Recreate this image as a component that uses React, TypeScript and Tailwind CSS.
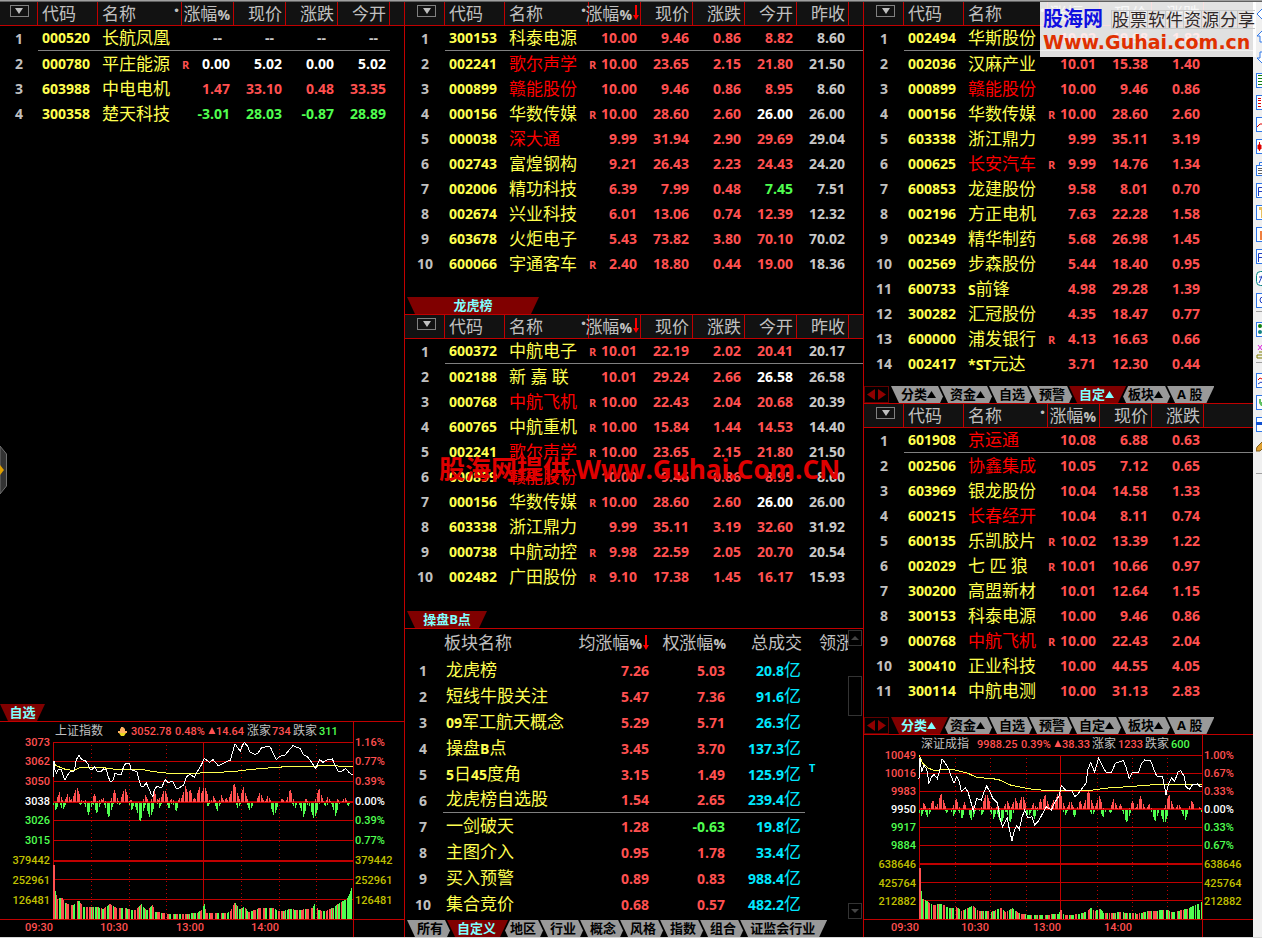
import clsx from "clsx";
import { FC, Fragment, ReactNode } from "react";

type Tone = "r" | "g" | "w" | "n";

interface Stock {
  code: string;
  name: string;
  hot?: boolean;
  margin?: boolean;
  values: string[];
  tones: string;
}

const toneClass: Record<Tone, string> = {
  r: "text-[#ff5050]",
  g: "text-[#50ff50]",
  w: "text-white",
  n: "text-[#c8c8c8]",
};

// "code|name|flags|values|tones", flags: h = highlighted name, R = margin mark
const parse = (rows: string[]): Stock[] =>
  rows.map((row) => {
    const [code, name, flags, values, tones] = row.split("|");
    return {
      code,
      name,
      hot: flags.includes("h"),
      margin: flags.includes("R"),
      values: values.split(" "),
      tones,
    };
  });

const watchList = parse([
  "000520|长航凤凰||-- -- -- --|nnnn",
  "000780|平庄能源|R|0.00 5.02 0.00 5.02|wwww",
  "603988|中电电机||1.47 33.10 0.48 33.35|rrrr",
  "300358|楚天科技||-3.01 28.03 -0.87 28.89|gggg",
]);

const dragonList = parse([
  "300153|科泰电源||10.00 9.46 0.86 8.82 8.60|rrrrn",
  "002241|歌尔声学|hR|10.00 23.65 2.15 21.80 21.50|rrrrn",
  "000899|赣能股份|h|10.00 9.46 0.86 8.95 8.60|rrrrn",
  "000156|华数传媒|R|10.00 28.60 2.60 26.00 26.00|rrrwn",
  "000038|深大通|h|9.99 31.94 2.90 29.69 29.04|rrrrn",
  "002743|富煌钢构||9.21 26.43 2.23 24.43 24.20|rrrrn",
  "002006|精功科技||6.39 7.99 0.48 7.45 7.51|rrrgn",
  "002674|兴业科技||6.01 13.06 0.74 12.39 12.32|rrrrn",
  "603678|火炬电子||5.43 73.82 3.80 70.10 70.02|rrrrn",
  "600066|宇通客车|R|2.40 18.80 0.44 19.00 18.36|rrrrn",
]);

const pointList = parse([
  "600372|中航电子|R|10.01 22.19 2.02 20.41 20.17|rrrrn",
  "002188|新 嘉 联||10.01 29.24 2.66 26.58 26.58|rrrwn",
  "000768|中航飞机|hR|10.00 22.43 2.04 20.68 20.39|rrrrn",
  "600765|中航重机|R|10.00 15.84 1.44 14.53 14.40|rrrrn",
  "002241|歌尔声学|hR|10.00 23.65 2.15 21.80 21.50|rrrrn",
  "000899|赣能股份|h|10.00 9.46 0.86 8.95 8.60|rrrrn",
  "000156|华数传媒|R|10.00 28.60 2.60 26.00 26.00|rrrwn",
  "603338|浙江鼎力||9.99 35.11 3.19 32.60 31.92|rrrrn",
  "000738|中航动控|R|9.98 22.59 2.05 20.70 20.54|rrrrn",
  "002482|广田股份|R|9.10 17.38 1.45 16.17 15.93|rrrrn",
]);

const customList = parse([
  "002494|华斯股份||10.02 19.98 1.82|rrr",
  "002036|汉麻产业||10.01 15.38 1.40|rrr",
  "000899|赣能股份|h|10.00 9.46 0.86|rrr",
  "000156|华数传媒|R|10.00 28.60 2.60|rrr",
  "603338|浙江鼎力||9.99 35.11 3.19|rrr",
  "000625|长安汽车|hR|9.99 14.76 1.34|rrr",
  "600853|龙建股份||9.58 8.01 0.70|rrr",
  "002196|方正电机||7.63 22.28 1.58|rrr",
  "002349|精华制药||5.68 26.98 1.45|rrr",
  "002569|步森股份||5.44 18.40 0.95|rrr",
  "600733|S前锋||4.98 29.28 1.39|rrr",
  "300282|汇冠股份||4.35 18.47 0.77|rrr",
  "600000|浦发银行|R|4.13 16.63 0.66|rrr",
  "002417|*ST元达||3.71 12.30 0.44|rrr",
]);

const categoryList = parse([
  "601908|京运通|h|10.08 6.88 0.63|rrr",
  "002506|协鑫集成|h|10.05 7.12 0.65|rrr",
  "603969|银龙股份||10.04 14.58 1.33|rrr",
  "600215|长春经开|h|10.04 8.11 0.74|rrr",
  "600135|乐凯胶片|R|10.02 13.39 1.22|rrr",
  "002029|七 匹 狼|R|10.01 10.66 0.97|rrr",
  "300200|高盟新材||10.01 12.64 1.15|rrr",
  "300153|科泰电源||10.00 9.46 0.86|rrr",
  "000768|中航飞机|hR|10.00 22.43 2.04|rrr",
  "300410|正业科技||10.00 44.55 4.05|rrr",
  "300114|中航电测||10.00 31.13 2.83|rrr",
]);

const sectors = [
  ["龙虎榜", "7.26", "5.03", "20.8"],
  ["短线牛股关注", "5.47", "7.36", "91.6"],
  ["09军工航天概念", "5.29", "5.71", "26.3"],
  ["操盘B点", "3.45", "3.70", "137.3"],
  ["5日45度角", "3.15", "1.49", "125.9"],
  ["龙虎榜自选股", "1.54", "2.65", "239.4"],
  ["一剑破天", "1.28", "-0.63", "19.8"],
  ["主图介入", "0.95", "1.78", "33.4"],
  ["买入预警", "0.89", "0.83", "988.4"],
  ["集合竞价", "0.68", "0.57", "482.2"],
];

/** Chinese at the list size, latin letters and digits in the number face. */
const Mixed: FC<{ text: string }> = ({ text }) => (
  <>
    {text
      .split(/([A-Za-z0-9%*]+)/)
      .filter(Boolean)
      .map((part, i) =>
        /^[A-Za-z0-9%*]/.test(part) ? (
          <span key={i} className="text-sm leading-none font-bold">
            {part}
          </span>
        ) : (
          <Fragment key={i}>{part}</Fragment>
        ),
      )}
  </>
);

const SortArrow: FC = () => (
  <svg width="7" height="17" viewBox="0 0 7 17" className="shrink-0">
    <path d="M3 0h2v10h2L4 15 1 10h2z" fill="#ff0000" />
  </svg>
);

interface StockTableProps {
  stocks: Stock[];
  columns: string[];
  sorted?: boolean;
  narrow?: boolean;
}

const StockTable: FC<StockTableProps> = ({
  stocks,
  columns,
  sorted,
  narrow,
}) => (
  <table className="w-full table-fixed border-separate border-spacing-0">
    <colgroup>
      <col className={narrow ? "w-[38px]" : "w-10"} />
      <col className="w-[60px]" />
      <col className="w-[84px]" />
      {columns.map((c) => (
        <col key={c} className="w-[52px]" />
      ))}
      <col />
    </colgroup>
    <thead>
      <tr className="h-6 bg-[#121212] text-[17px] leading-[22px] whitespace-nowrap text-[#c0c0c0] [&>th]:h-6 [&>th]:border-b [&>th]:border-[#c00000] [&>th]:p-0 [&>th]:font-normal">
        <th className="border-r align-top">
          <div className={clsx("flex justify-center", narrow ? "pl-px" : "pl-1")}>
            <button
              aria-label="选择列"
              className="mt-[3px] flex h-3 w-[19px] items-center justify-center border border-[#808080]"
            >
              <svg width="8" height="6" viewBox="0 0 8 6">
                <path d="M0 0h8L4 6z" fill="#c0c0c0" />
              </svg>
            </button>
          </div>
        </th>
        <th className="border-r">
          <div className="pl-1 text-left">代码</div>
        </th>
        <th className="border-r">
          <div className="flex justify-between pr-px pl-1">
            名称<span className="font-['DejaVu_Sans'] text-xs">•</span>
          </div>
        </th>
        {columns.map((c, i) => (
          <th key={c} className="border-r">
            <div
              className={clsx(
                "flex items-center justify-end",
                sorted && i === 0 ? "pr-px" : "pr-[3px]",
              )}
            >
              <span>
                <Mixed text={c} />
              </span>
              {sorted && i === 0 && <SortArrow />}
            </div>
          </th>
        ))}
        <th />
      </tr>
    </thead>
    <tbody>
      {stocks.map((s, i) => (
        <tr
          key={s.code}
          className={clsx(
            "text-sm leading-[24px] font-bold whitespace-nowrap [&>td]:h-[25px] [&>td]:p-0",
            i === 0 &&
              "[&>td]:border-[#808080] [&>td:not(:first-child)]:border-b",
            i === 0 && narrow && "[&>td:last-child]:border-b-0!",
          )}
        >
          <td className="text-center text-[#c0c0c0]">{i + 1}</td>
          <td className="text-[#ffff50]">
            <div className="pl-1">{s.code}</div>
          </td>
          <td
            className={clsx(
              "text-[17px] font-normal",
              s.hot ? "text-[#ff0000]" : "text-[#ffff50]",
            )}
          >
            <div className="h-6 pl-1 leading-[23px]">
              <Mixed text={s.name} />
            </div>
          </td>
          {s.values.map((v, n) => (
            <td key={n} className={toneClass[s.tones[n] as Tone]}>
              <div
                className={clsx(
                  "flex h-6 items-baseline",
                  s.margin && n === 0 ? "justify-between" : "justify-end",
                  v === "--" ? "pr-3" : "pr-1",
                )}
              >
                {s.margin && n === 0 && (
                  <span className="text-[11px] leading-none text-[#ff5050]">
                    R
                  </span>
                )}
                <span>{v}</span>
              </div>
            </td>
          ))}
          <td />
        </tr>
      ))}
    </tbody>
  </table>
);

const clips = {
  full: "[clip-path:polygon(0_0,100%_0,calc(100%-8px)_100%,8px_100%)]",
  next: "[clip-path:polygon(0_0,calc(100%-10px)_0,calc(100%-5px)_62%,calc(100%-8px)_100%,8px_100%)]",
  afterActive:
    "[clip-path:polygon(10px_0,calc(100%-10px)_0,calc(100%-5px)_62%,calc(100%-8px)_100%,8px_100%,5px_62%)]",
};

const TabBar: FC<{ tabs: string[]; active: string }> = ({ tabs, active }) => {
  const activeIndex = tabs.indexOf(active);

  return (
    <div className="flex h-[17px]">
      {tabs.map((tab, i) => {
        const isActive = i === activeIndex;
        const up = tab.endsWith("▲");
        return (
          <button
            key={tab}
            className={clsx(
              "flex items-center pr-3 pl-[10px] text-[13px] leading-[17px] font-bold whitespace-nowrap",
              i > 0 && "-ml-2",
              isActive
                ? "z-10 bg-[#800000] text-[#80ffff]"
                : "bg-[#999999] text-black",
              isActive || i === tabs.length - 1
                ? clips.full
                : i === activeIndex + 1
                  ? clips.afterActive
                  : clips.next,
            )}
          >
            {up ? tab.slice(0, -1) : tab}
            {up && (
              <svg width="9" height="7" viewBox="0 0 9 7">
                <path d="M4.5 0 9 7H0z" fill="currentColor" />
              </svg>
            )}
          </button>
        );
      })}
    </div>
  );
};

const TabScroller: FC = () => (
  <div className="mr-[2px] flex h-[17px] w-[25px] items-center justify-around border border-[#600000]">
    <button aria-label="左移">
      <svg width="8" height="11" viewBox="0 0 8 11">
        <path d="M8 0v11L0 5.5z" fill="#900000" />
      </svg>
    </button>
    <button aria-label="右移">
      <svg width="8" height="11" viewBox="0 0 8 11">
        <path d="M0 0v11l8-5.5z" fill="#900000" />
      </svg>
    </button>
  </div>
);

const TitleTab: FC<{ children: ReactNode; className: string }> = ({
  children,
  className,
}) => (
  <button
    className={clsx(
      "block h-[17px] shrink-0 bg-[#800000] text-center text-[13px] leading-[17px] font-bold text-[#80ffff]",
      clips.full,
      className,
    )}
  >
    {children}
  </button>
);

const rightTabs = ["分类▲", "资金▲", "自选", "预警", "自定▲", "板块▲", "A 股"];

const bottomTabs = [
  "所有",
  "自定义",
  "地区",
  "行业",
  "概念",
  "风格",
  "指数",
  "组合",
  "证监会行业",
];

type Point = [number, number];

interface Chart {
  width: number;
  height: number;
  left: number;
  right: number;
  headY: number;
  top: number;
  bottom: number;
  grid: number[];
  thick: number[];
  dotted: number[];
  middle: number;
  labels: [number, string, string, string][];
  times: [number, string][];
  head: [number, string, string][];
  triangleX: number;
  price: string;
  average: string;
  rises: Point[];
  falls: Point[];
  volume: Point[];
  volumeColors: string;
}

const RED = "#ff5050";
const GREEN = "#50ff50";
const GREY = "#c0c0c0";
const OLIVE = "#c0c000";
const LINE = "#c00000";

const shanghai: Chart = {
  width: 404,
  height: 215,
  left: 53,
  right: 353,
  headY: 9,
  top: 20,
  bottom: 197,
  grid: [20, 39, 59, 98, 118, 157, 177],
  thick: [80, 139],
  dotted: [91, 129, 166, 241, 279, 316],
  middle: 203,
  labels: [
    [20, "3073", "1.16%", RED],
    [39, "3062", "0.77%", RED],
    [59, "3050", "0.39%", RED],
    [79, "3038", "0.00%", "#ffffff"],
    [98, "3026", "0.39%", GREEN],
    [118, "3015", "0.77%", GREEN],
    [138, "379442", "379442", OLIVE],
    [158, "252961", "252961", OLIVE],
    [178, "126481", "126481", OLIVE],
  ],
  times: [
    [39, "09:30"],
    [114, "10:30"],
    [190, "13:00"],
    [265, "14:00"],
  ],
  head: [
    [55, "上证指数", GREY],
    [131, "3052.78", RED],
    [175, "0.48%", RED],
    [216, "14.64", RED],
    [247, "涨家", GREY],
    [272, "734", RED],
    [293, "跌家", GREY],
    [319, "311", GREEN],
  ],
  triangleX: 209,
  price:
    "0,105 3,58 6,83 10,93 16,83 24,81 30,99 36,115 44,99 52,89 64,87 70,53 78,39 86,53 98,57 106,67 110,81 118,83 124,73 132,87 144,89 152,81 160,83 166,105 172,119 180,115 186,93 194,97 204,99 212,73 220,63 230,65 234,83 242,85 252,89 258,113 264,133 270,135 280,123 288,141 294,155 300,163 304,143 312,133 326,137 336,113 344,121 360,119 370,141 380,137 392,129 400,105 410,97 424,105 434,87 444,71 454,49 462,55 470,61 480,53 496,71 508,65 520,59 532,55 538,33 546,5 554,17 562,27 568,11 574,1 584,13 590,29 604,37 614,35 626,17 644,13 652,15 660,33 670,53 680,43 696,39 708,25 720,11 732,17 742,19 752,39 764,45 776,61 788,79 800,53 810,61 824,53 838,51 846,69 856,89 868,87 878,79 888,91 898,99",
  average:
    "0,61 10,71 24,77 40,83 64,85 80,77 124,75 150,77 180,81 260,81 290,87 320,91 340,93 440,93 488,91 540,89 580,84 630,79 700,74 780,73 840,69 860,73 900,73",
  rises: [
    [18, 30], [43, 26], [53, 10], [70, 48], [94, 8], [123, 24], [142, 12],
    [150, 12], [183, 36], [214, 44], [232, 8], [276, 22], [303, 32], [320, 16],
    [333, 42], [356, 14], [381, 20], [396, 48], [410, 38], [424, 14], [438, 46],
    [453, 50], [480, 18], [504, 20], [518, 14], [542, 58], [570, 46], [620, 32],
    [644, 22], [686, 12], [710, 38], [757, 12], [797, 42], [824, 18], [852, 10],
    [874, 16],
  ],
  falls: [
    [7, 24], [28, 24], [80, 6], [105, 36], [130, 32], [166, 44], [196, 10],
    [235, 22], [260, 56], [290, 48], [318, 14], [347, 18], [368, 26], [463, 12],
    [492, 24], [554, 18], [590, 26], [662, 42], [724, 18], [750, 42], [782, 50],
    [818, 14], [846, 38], [884, 10],
  ],
  volume: [
    [0, 162], [3, 162], [6, 84], [12, 60], [26, 64], [34, 50], [44, 44],
    [60, 42], [76, 56], [90, 36], [130, 36], [150, 30], [170, 46], [190, 32],
    [212, 34], [230, 28], [244, 26], [264, 44], [280, 26], [298, 42], [306, 22],
    [340, 16], [380, 14], [430, 18], [446, 28], [453, 46], [458, 18],
    [520, 18], [532, 26], [544, 50], [558, 30], [574, 36], [586, 20],
    [620, 34], [660, 32], [680, 22], [710, 30], [740, 26], [755, 30],
    [776, 32], [784, 46], [796, 26], [816, 24], [840, 34], [860, 50],
    [880, 60], [890, 80], [900, 110],
  ],
  volumeColors: "RGGRRGGGRRRRGRRR.GRRGG.GRGGRRRGG.RR.RRGRGGGGRGG.",
};

const shenzhen: Chart = {
  width: 389,
  height: 202,
  left: 55,
  right: 338,
  headY: 9,
  top: 20,
  bottom: 184,
  grid: [20, 38, 56, 92, 110, 147, 165],
  thick: [74, 129],
  dotted: [91, 126, 162, 233, 268, 303],
  middle: 196,
  labels: [
    [20, "10049", "1.00%", RED],
    [38, "10016", "0.67%", RED],
    [56, "9983", "0.33%", RED],
    [74, "9950", "0.00%", "#ffffff"],
    [92, "9917", "0.33%", GREEN],
    [110, "9884", "0.67%", GREEN],
    [129, "638646", "638646", OLIVE],
    [148, "425764", "425764", OLIVE],
    [166, "212882", "212882", OLIVE],
  ],
  times: [
    [41, "09:30"],
    [111, "10:30"],
    [183, "13:00"],
    [254, "14:00"],
  ],
  head: [
    [57, "深证成指", GREY],
    [113, "9988.25", RED],
    [157, "0.39%", RED],
    [198, "38.33", RED],
    [228, "涨家", GREY],
    [254, "1233", RED],
    [281, "跌家", GREY],
    [307, "600", GREEN],
  ],
  triangleX: 191,
  price:
    "0,71 3,9 8,51 15,31 23,43 30,85 37,67 45,59 55,71 63,43 69,11 79,25 89,43 97,65 105,85 113,65 121,79 127,109 139,99 147,111 155,139 163,167 173,131 187,135 195,111 203,93 213,111 221,129 235,143 239,165 245,199 251,215 259,199 265,189 271,223 279,257 287,223 293,211 301,223 309,187 317,165 327,189 339,185 347,209 359,197 371,175 381,155 397,165 407,143 421,121 427,91 439,105 457,105 467,125 477,117 487,103 501,85 507,43 515,23 527,51 539,9 551,35 561,51 577,53 589,25 613,17 621,37 631,71 639,53 659,51 667,27 677,15 695,17 703,39 713,63 731,65 741,119 749,85 757,69 767,79 777,51 785,47 795,63 801,95 811,103 821,89 835,87 843,95 849,93",
  average:
    "1,1 11,25 27,39 47,47 77,43 107,45 147,55 173,67 237,73 277,91 327,101 387,107 507,107 567,99 627,95 707,89 849,89",
  rises: [
    [13, 20], [40, 28], [65, 48], [110, 32], [135, 20], [163, 12], [201, 50],
    [235, 12], [263, 28], [287, 36], [309, 46], [343, 20], [363, 30],
    [377, 44], [405, 36], [419, 60], [453, 28], [482, 26], [507, 56],
    [539, 42], [583, 32], [603, 14], [639, 24], [663, 40], [689, 16],
    [749, 46], [777, 20], [817, 26], [839, 8],
  ],
  falls: [
    [5, 20], [25, 24], [82, 10], [102, 18], [127, 28], [157, 34], [187, 16],
    [222, 28], [245, 46], [272, 38], [327, 22], [345, 26], [437, 16],
    [465, 22], [519, 18], [551, 24], [573, 10], [622, 40], [707, 36],
    [735, 46], [797, 32], [848, 10],
  ],
  volume: [
    [0, 152], [3, 152], [7, 62], [22, 54], [42, 42], [67, 46], [89, 32],
    [111, 36], [127, 24], [161, 40], [173, 26], [217, 22], [247, 34],
    [257, 22], [279, 32], [297, 18], [327, 12], [417, 14], [425, 30],
    [433, 12], [477, 14], [503, 22], [515, 34], [527, 24], [541, 32],
    [553, 18], [607, 20], [657, 16], [687, 24], [727, 26], [743, 28],
    [757, 20], [777, 24], [807, 32], [837, 46], [843, 10], [849, 90],
  ],
  volumeColors: "RGGGRGGGGRRRG.RRRRGRGGGGRR.GGRGGRGGG.RRGGRR.",
};

const peakHeight = (peaks: Point[], x: number) =>
  Math.max(
    0,
    ...peaks.map(([px, h]) => h * (1 - Math.abs(px - x) / (4 + h / 4))),
  );

const heightAt = (line: Point[], x: number) => {
  const n = line.findIndex(([px]) => px >= x);
  if (n <= 0) return line[0][1];
  const [x0, h0] = line[n - 1];
  const [x1, h1] = line[n];
  return h0 + ((h1 - h0) * (x - x0)) / (x1 - x0);
};

const IndexChart: FC<{ chart: Chart; label: string; bell?: boolean }> = ({
  chart: c,
  label,
  bell,
}) => {
  const zero = c.thick[0];
  const ticks = Array.from({ length: c.right - c.left }, (_, i) => i);

  // the opening print is red, the closing auction green
  const volumeFill = (i: number) => {
    if (i < 2) return RED;
    if (i > ticks.length - 12) return GREEN;
    return c.volumeColors[i % c.volumeColors.length] === "R" ? RED : GREEN;
  };

  return (
    <svg
      role="img"
      aria-label={label}
      viewBox={`0 0 ${c.width} ${c.height}`}
      className="block w-full font-[Roboto,'Noto_Sans_CJK_SC',sans-serif] text-[11px] font-medium"
      dominantBaseline="central"
    >
      <g stroke={LINE} shapeRendering="crispEdges">
        {c.grid.map((y) => (
          <path key={y} d={`M${c.left} ${y + 0.5}H${c.right}`} />
        ))}
        {c.thick.map((y) => (
          <path key={y} d={`M${c.left} ${y}H${c.right}`} strokeWidth="2" />
        ))}
        {c.dotted.map((x) => (
          <path
            key={x}
            d={`M${x + 0.5} ${c.top + 3}V${c.bottom}`}
            strokeDasharray="1 3"
          />
        ))}
        <path d={`M${c.left + 0.5} ${c.top}V${c.bottom}`} />
        <path d={`M${c.middle + 0.5} ${c.top}V${c.bottom}`} />
        <path d={`M${c.right + 0.5} 0V${c.height}`} />
        <path d={`M0 ${c.bottom + 0.5}H${c.width}`} />
      </g>

      <g shapeRendering="crispEdges">
        {ticks.map((i) => {
          const up = Math.round(peakHeight(c.rises, i * 3) / 3);
          const down = Math.round(peakHeight(c.falls, i * 3) / 3);
          const volume = Math.round(heightAt(c.volume, i * 3) / 3);
          const blank = c.volumeColors[i % c.volumeColors.length] === ".";
          return (
            <Fragment key={i}>
              {up > 0 && i % 4 !== 3 && (
                <rect
                  x={c.left + i}
                  y={zero - up}
                  width="1"
                  height={up}
                  fill={RED}
                />
              )}
              {down > 0 && i % 4 !== 1 && (
                <rect
                  x={c.left + i}
                  y={zero + 1}
                  width="1"
                  height={down}
                  fill={GREEN}
                />
              )}
              {!blank && i % 6 !== 5 && (
                <rect
                  x={c.left + i}
                  y={c.bottom - volume}
                  width="1"
                  height={volume}
                  fill={volumeFill(i)}
                />
              )}
            </Fragment>
          );
        })}
      </g>

      <g
        transform={`translate(${c.left} ${c.top}) scale(${1 / 3})`}
        fill="none"
        strokeWidth="3"
        shapeRendering="crispEdges"
      >
        <polyline points={c.average} stroke="#ffff50" />
        <polyline points={c.price} stroke="#ffffff" />
      </g>

      {c.labels.map(([y, left, right, color]) => (
        <g key={y} fill={color}>
          <text x={c.left - 3} y={y} textAnchor="end">
            {left}
          </text>
          <text x={c.right + 2} y={y}>
            {right}
          </text>
        </g>
      ))}
      {c.times.map(([x, time]) => (
        <text
          key={time}
          x={x}
          y={c.bottom + 8}
          textAnchor="middle"
          fill={RED}
        >
          {time}
        </text>
      ))}
      {c.head.map(([x, text, color]) => (
        <text
          key={x}
          x={x}
          y={c.headY}
          fill={color}
          className={color === GREY ? "text-xs font-normal" : undefined}
        >
          {text}
        </text>
      ))}
      <path
        d={`M${c.triangleX + 3} ${c.headY - 4}l3.5 7h-7z`}
        fill={RED}
      />
      {bell && (
        <>
          <path
            d="M121 5h2l1 1 1 1v2h2v2h-9V9h2V7l1-1z"
            fill="#ffb060"
          />
          <path d="M119 11h7l-2 3h-3z" fill="#e8d820" />
        </>
      )}
    </svg>
  );
};

const SectorTable: FC = () => (
  <table className="w-full table-fixed border-separate border-spacing-0 whitespace-nowrap [&_td]:p-0 [&_th]:p-0">
    <colgroup>
      <col className="w-[38px]" />
      <col className="w-[130px]" />
      <col className="w-20" />
      <col className="w-[76px]" />
      <col className="w-[76px]" />
      <col />
    </colgroup>
    <thead>
      <tr className="text-[17px] leading-[28px] text-[#c0c0c0] [&>th]:h-7 [&>th]:font-normal">
        <th />
        <th className="text-left">
          <div className="h-7 pl-px">板块名称</div>
        </th>
        <th>
          <div className="flex h-7 items-center justify-end pr-1">
            <span>
              <Mixed text="均涨幅%" />
            </span>
            <SortArrow />
          </div>
        </th>
        <th>
          <div className="h-7 pr-[3px] text-right">
            <Mixed text="权涨幅%" />
          </div>
        </th>
        <th>
          <div className="h-7 pr-[3px] text-right">总成交</div>
        </th>
        <th className="overflow-hidden">
          <div className="h-7 pl-[14px] text-left">领涨</div>
        </th>
      </tr>
    </thead>
    <tbody>
      {sectors.map(([name, avg, weighted, amount], i) => (
        <tr
          key={name}
          className={clsx(
            "text-sm leading-[25px] font-bold [&>td]:h-[26px]",
            i === 5 &&
              "[&>td]:border-[#808080] [&>td:not(:first-child):not(:last-child)]:border-b",
          )}
        >
          <td>
            <div className="pr-[2px] text-center text-[#c0c0c0]">{i + 1}</div>
          </td>
          <td className="text-[17px] font-normal text-[#ffff50]">
            <div className="h-[25px] pl-[3px] leading-[23px]">
              <Mixed text={name} />
            </div>
          </td>
          <td className="text-[#ff5050]">
            <div className="h-[25px] pr-1 text-right">{avg}</div>
          </td>
          <td
            className={
              weighted.startsWith("-") ? "text-[#50ff50]" : "text-[#ff5050]"
            }
          >
            <div className="h-[25px] pr-1 text-right">{weighted}</div>
          </td>
          <td className="text-[#00e8ff]">
            <div className="flex h-[25px] items-baseline justify-end pr-1">
              {amount}
              <span className="text-[17px] leading-none font-normal">亿</span>
            </div>
          </td>
          <td className="align-top text-[#00e8ff]">
            {name === "5日45度角" && (
              <div className="pl-1 text-[11px] leading-[14px]">T</div>
            )}
          </td>
        </tr>
      ))}
    </tbody>
  </table>
);

const ScrollBar: FC = () => (
  <div className="flex w-[15px] shrink-0 flex-col pt-px pr-px">
    <button
      aria-label="向上"
      className="flex h-4 items-center justify-center border border-[#333333]"
    >
      <svg width="8" height="4" viewBox="0 0 8 4">
        <path d="M4 0l4 4H0z" fill="#444444" />
      </svg>
    </button>
    <div className="mt-[30px] h-10 border border-[#333333]" />
    <button
      aria-label="向下"
      className="mt-auto flex h-4 items-center justify-center border border-[#333333]"
    >
      <svg width="8" height="4" viewBox="0 0 8 4">
        <path d="M0 0h8L4 4z" fill="#444444" />
      </svg>
    </button>
  </div>
);

const Frame: FC<{ children?: ReactNode; stroke?: string }> = ({
  children,
  stroke = "#3078e8",
}) => (
  <>
    <rect
      x=".5"
      y=".5"
      width="14"
      height="14"
      fill="#ffffff"
      stroke={stroke}
    />
    {children}
  </>
);

const tools: { name: string; icon: ReactNode; gap?: string }[] = [
  {
    name: "还原",
    icon: <path d="M1 7l6-6 6 6-6 6z" fill="#fff" stroke="#3078e8" />,
  },
  {
    name: "上翻",
    icon: <path d="M1 7l6-6 6 6H9v6H4V7z" fill="#fff" stroke="#3078e8" />,
  },
  {
    name: "下翻",
    icon: <path d="M1 7h3V1h5v6h4l-6 6z" fill="#fff" stroke="#3078e8" />,
  },
  {
    name: "报价",
    icon: (
      <Frame>
        <path d="M2 2.5h11M2 5.5h11M2 8.5h11M2 11.5h11" stroke="#108010" />
      </Frame>
    ),
  },
  {
    name: "明细",
    icon: (
      <Frame>
        <path
          d="M2 3.5h3m1 0h3M2 5.5h3m1 0h3M2 8.5h3m1 0h3M2 11.5h3m1 0h3"
          stroke="#e00000"
        />
      </Frame>
    ),
  },
  {
    name: "分时",
    icon: (
      <Frame>
        <path d="M1 10l3-3h3l5-5" fill="none" stroke="#e00000" />
      </Frame>
    ),
  },
  {
    name: "K线",
    icon: (
      <Frame>
        <path d="M3.5 3v9M2 6h3v4H2z" fill="#e00000" stroke="#e00000" />
      </Frame>
    ),
  },
  {
    name: "资料",
    icon: (
      <>
        <path d="M3.5 4V1.5h11V10" fill="#fff" stroke="#3078e8" />
        <rect
          x=".5"
          y="4.5"
          width="11"
          height="10"
          fill="#fff"
          stroke="#3078e8"
        />
        <path d="M2 7.5h8M2 9.5h8M2 12.5h8" stroke="#606060" />
      </>
    ),
  },
  {
    name: "财务",
    icon: (
      <Frame>
        <path d="M2.5 13V4.5H9M2 8.5h6" fill="none" stroke="#2040c0" />
      </Frame>
    ),
  },
  {
    name: "工具",
    icon: (
      <Frame>
        <path d="M3 2h8v3H3zM5 5h2v8H5z" fill="#e8c060" />
      </Frame>
    ),
  },
  {
    name: "柱图",
    icon: (
      <Frame>
        <path d="M4 4h4v9H4z" fill="#f08040" />
      </Frame>
    ),
  },
  {
    name: "公式",
    icon: (
      <Frame>
        <path d="M2.5 13V4.5H9M2 8.5h6" fill="none" stroke="#2040c0" />
      </Frame>
    ),
  },
  {
    name: "画线",
    icon: (
      <>
        <rect
          x=".5"
          y=".5"
          width="14"
          height="14"
          rx="4"
          fill="#fff"
          stroke="#008080"
        />
        <path d="M3 12l4-9M3 6h6" stroke="#2040c0" />
      </>
    ),
  },
  {
    name: "选股",
    gap: "mt-0 mb-[6px]",
    icon: (
      <Frame>
        <circle cx="7" cy="7" r="3" fill="none" stroke="#2040c0" />
      </Frame>
    ),
  },
  {
    name: "组合",
    icon: (
      <Frame>
        <circle cx="4" cy="4" r="2" fill="#108010" />
        <circle cx="4" cy="10" r="2" fill="#108080" />
      </Frame>
    ),
  },
  {
    name: "板块",
    gap: "mt-0 mb-[6px]",
    icon: (
      <>
        <path d="M2 1l4 5M6 1L2 6" stroke="#e020e0" />
        <path d="M3 8h6v3H1v3h9" fill="none" stroke="#808000" />
      </>
    ),
  },
  {
    name: "对比",
    icon: (
      <Frame>
        <path d="M2 7l2-2 2 1 3-4" fill="none" stroke="#e00000" />
        <path d="M2 11l3-2 3 2" fill="none" stroke="#2040c0" />
      </Frame>
    ),
  },
  {
    name: "行业",
    icon: (
      <Frame>
        <path d="M3 4h2v3h2V3h4v8H5L3 8z" fill="#60c060" />
      </Frame>
    ),
  },
  {
    name: "分隔",
    icon: (
      <Frame>
        <path d="M0 5h15v3H0z" fill="#1050d0" />
      </Frame>
    ),
  },
  {
    name: "备注",
    gap: "mt-4",
    icon: (
      <path d="M0 12l1-4 6-6 4 3-7 7z" fill="#e0a030" stroke="#806020" />
    ),
  },
];

const ToolBar: FC = () => (
  <aside className="flex flex-col overflow-hidden bg-[#f0f0f0] pt-px pl-[3px]">
    {tools.map((tool) => (
      <Fragment key={tool.name}>
        <button
          aria-label={tool.name}
          className="flex h-[22px] w-[22px] shrink-0 items-center"
        >
          <svg width="15" height="15" viewBox="0 0 15 15">
            {tool.icon}
          </svg>
        </button>
        {tool.gap && (
          <hr className={clsx("w-5 border-[#a0a0a0]", tool.gap)} />
        )}
      </Fragment>
    ))}
  </aside>
);

const App: FC = () => (
  <div className="relative flex min-h-screen flex-col overflow-hidden bg-black font-['Open_Sans','Noto_Sans_CJK_SC',sans-serif]">
    <div className="h-[2px] border-t border-[#a0a0a0] bg-[#606060]" />

    <main className="grid flex-1 grid-cols-[minmax(0,404fr)_minmax(0,459fr)_minmax(0,390fr)_9px]">
      <section className="flex flex-col">
        <StockTable
          stocks={watchList}
          columns={["涨幅%", "现价", "涨跌", "今开"]}
          narrow
        />
        <div className="flex-1" />
        <TitleTab className="w-[45px]">自选</TitleTab>
        <div className="border-t border-[#c00000]">
          <IndexChart chart={shanghai} label="上证指数" bell />
        </div>
      </section>

      <section className="flex flex-col border-l border-[#c00000]">
        <StockTable
          stocks={dragonList}
          columns={["涨幅%", "现价", "涨跌", "今开", "昨收"]}
          sorted
        />
        <TitleTab className="mt-[21px] ml-[2px] w-[132px]">龙虎榜</TitleTab>
        <div className="border-t border-[#c00000]">
          <StockTable
            stocks={pointList}
            columns={["涨幅%", "现价", "涨跌", "今开", "昨收"]}
            sorted
          />
        </div>
        <TitleTab className="mt-[22px] ml-[2px] w-20">操盘B点</TitleTab>
        <div className="flex flex-1 border-t border-[#c00000]">
          <div className="min-w-0 flex-1">
            <SectorTable />
          </div>
          <ScrollBar />
        </div>
        <div className="mt-px ml-[2px]">
          <TabBar tabs={bottomTabs} active="自定义" />
        </div>
      </section>

      <section className="flex flex-col border-l border-[#c00000]">
        <StockTable
          stocks={customList}
          columns={["涨幅%", "现价", "涨跌"]}
        />
        <div className="mt-[10px] flex">
          <TabScroller />
          <TabBar tabs={rightTabs} active="自定▲" />
        </div>
        <div className="border-t border-[#c00000]">
          <StockTable
            stocks={categoryList}
            columns={["涨幅%", "现价", "涨跌"]}
          />
        </div>
        <div className="mt-auto flex">
          <TabScroller />
          <TabBar tabs={rightTabs} active="分类▲" />
        </div>
        <div className="border-t border-[#c00000]">
          <IndexChart chart={shenzhen} label="深证成指" />
        </div>
      </section>

      <ToolBar />
    </main>

    <div className="h-px bg-[#d8d8d8]" />

    <button
      aria-label="展开侧栏"
      className="absolute top-1/2 left-0 mt-[-23px]"
    >
      <svg width="8" height="49" viewBox="0 0 8 49">
        <path d="M0 0l6.5 8v32L0 48z" fill="#333333" stroke="#707070" />
        <path d="M0 19l4 5-4 5z" fill="#e0a000" />
      </svg>
    </button>

    <p className="pointer-events-none absolute top-[451px] left-[439px] z-20 text-[26px] leading-[36px] font-bold whitespace-nowrap text-[#e00000]">
      股海网提供 Www.Guhai.Com.CN
    </p>

    <div className="absolute top-[2px] right-[6px] z-20 h-[55px] w-[216px] bg-white/88 pl-[3px] whitespace-nowrap">
      <div className="flex items-center gap-2 pt-1">
        <span className="text-[20px] leading-[26px] font-bold text-[#1010e0]">
          股海网
        </span>
        <span className="flex text-[17px] leading-[18px] text-[#302828]">
          {[..."股票软件资源分享"].map((ch) => (
            <span
              key={ch}
              className="w-[18px] border border-r-0 border-[#c8c8c8] text-center leading-[17px]"
            >
              {ch}
            </span>
          ))}
        </span>
      </div>
      <a
        href="#guhai"
        className="block font-['DejaVu_Sans',sans-serif] text-[19px] leading-[20px] font-bold text-[#e03000]"
      >
        Www.Guhai.com.cn
      </a>
    </div>
  </div>
);

export default App;
